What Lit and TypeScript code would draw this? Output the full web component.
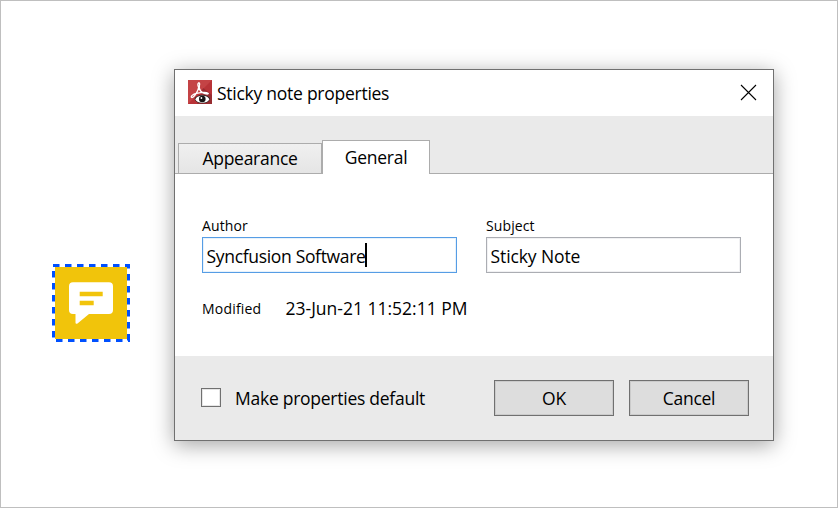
import { LitElement, html, css, svg } from "lit";
import { customElement, property } from "lit/decorators.js";

@customElement("sticky-marker")
class StickyMarker extends LitElement {
  static styles = css`
    :host { display: block; width: 78px; height: 78px; }
    svg { display: block; }
  `;
  render() {
    return html`<svg width="78" height="78" viewBox="0 0 78 78">
      <rect x="3" y="3" width="72" height="72" fill="#f1c40b"></rect>
      <g fill="none" stroke="#0050ff" stroke-width="3">
        <path d="M1 1.5H78" stroke-dasharray="6.500 5.500"></path>
        <path d="M1.500 7V76" stroke-dasharray="6.500 5.500"></path>
        <path d="M76.500 0V78" stroke-dasharray="6.500 5.500" stroke-dashoffset="2"></path>
        <path d="M4 76.500H78" stroke-dasharray="6.500 5.500"></path>
      </g>
      <path fill="#fff" d="M21 18.300H57a4 4 0 0 1 4 4V46a4 4 0 0 1-4 4H37L25.500 59.400q-2 1.200-2-1V50H21a4 4 0 0 1-4-4V22.300a4 4 0 0 1 4-4Z"></path>
      <path fill="#f1c40b" d="M27.700 27.700h23v4.600h-23zM27.700 36.800h14v4.500h-14z"></path>
    </svg>`;
  }
}

@customElement("text-field")
class TextField extends LitElement {
  @property() label = "";
  @property() value = "";
  @property({ type: Boolean, reflect: true }) active = false;
  static styles = css`
    :host { display: block; width: 255px; }
    .label { font-size: 14px; line-height: 20px; height: 21px; letter-spacing: 0.1px; }
    .box {
      box-sizing: border-box; height: 36px; border: 1px solid #abadb3; background: #fff;
      display: flex; align-items: center; padding: 1px 0 0 3.500px;
      box-shadow: inset 0 0 0 1px #f1f1f3;
      font-size: 17.500px; letter-spacing: -0.1px; line-height: 24px; white-space: nowrap;
    }
    :host([active]) .box { border-color: #569de5; letter-spacing: -0.320px; box-shadow: inset 0 0 0 1px #e8f2fb; }
    .caret { width: 2px; height: 24px; background: #000; margin: -2px 0 0 -0.300px; }
  `;
  render() {
    return html`<div class="label">${this.label}</div>
      <div class="box"><span>${this.value}</span>${this.active ? html`<i class="caret"></i>` : ""}</div>`;
  }
}

const logo = svg`
  <rect width="24" height="24" fill="#b83337"></rect>
  <path d="M0 0H24L0 24Z" fill="#c44345"></path>
  <path d="M15 8L24 15V24H9Z" fill="#962c30"></path>
  <path d="M10.800 2.700C9.300 3.500 10 6 10.600 7.500C10.200 11 6 17.500 3.800 17.500C2 16.500 5 14.200 8.500 13.400C12.500 12.500 18.500 11.800 20.300 13.500C19.500 15 14.500 13 12.800 11.200C11.200 9.500 10.800 7.500 11.400 5.500C11.800 4 11.700 2.800 10.800 2.700Z" fill="none" stroke="#fff" stroke-width="1.300" stroke-linejoin="round"></path>
  <ellipse cx="14.300" cy="19.100" rx="7.600" ry="4.100" fill="#262020"></ellipse>
  <ellipse cx="14.300" cy="19.300" rx="6.800" ry="3.500" fill="#fff"></ellipse>
  <circle cx="14.300" cy="19" r="3.300" fill="#151515"></circle>
  <circle cx="13.400" cy="18" r="0.900" fill="#fff"></circle>`;

@customElement("app-root")
class AppRoot extends LitElement {
  static styles = css`
    :host {
      box-sizing: border-box; display: flex; align-items: flex-start;
      width: 838px; height: 508px; background: #fff; border: 1px solid #bfbfbf;
      padding: 68px 0 0 51px; overflow: hidden;
      font-family: "Open Sans", "Noto Sans", sans-serif; color: #000;
      font-size: 17.500px; line-height: 24px; letter-spacing: -0.260px;
    }
    * { box-sizing: border-box; }
    sticky-marker { margin-top: 195px; flex: none; }
    .dialog {
      width: 600px; height: 372px; margin-left: 44px; flex: none;
      border: 1px solid #707070; background: #fff;
      box-shadow: 0 4px 20px rgba(0, 0, 0, 0.36);
      display: flex; flex-direction: column;
    }
    .title { height: 46px; display: flex; padding: 10px 16px 0 13px; }
    .title .name { margin: 1px 0 0 5px; flex: 1; }
    .close { margin-top: 4px; }
    .tabs {
      height: 58px; background: #eaeaea; border-bottom: 1px solid #acacac;
      display: flex; align-items: flex-end; padding-left: 3px;
    }
    .tab {
      width: 144px; height: 30px; border: 1px solid #acacac; border-bottom: 0;
      background: linear-gradient(#f0f0f0, #e5e5e5); text-align: center; padding-top: 2px;
    }
    .tab.on {
      width: 108px; height: 34px; margin-bottom: -1px; background: #fff; padding-top: 4px;
    }
    .body { height: 182px; padding: 42px 27px 0; }
    .fields { display: flex; gap: 29px; }
    .modified { display: flex; margin-top: 23px; align-items: flex-start; letter-spacing: 0; }
    .modified .key { width: 83.500px; padding-top: 1px; font-size: 14px; letter-spacing: 0.200px; }
    .footer { flex: 1; background: #eaeaea; display: flex; padding: 24px 24px 0 26px; }
    .check { width: 20px; height: 19px; border: 1px solid #707070; background: #fff; margin-top: 8px; box-shadow: inset 0 0 0 1px #e6e6e6; }
    .make { flex: 1; margin: 6px 0 0 14px; }
    .btn {
      width: 120px; height: 36px; border: 1px solid #707070; background: #ddd;
      box-shadow: inset 0 0 0 1px #cbcbcb;
      text-align: center; padding-top: 5px; margin-left: 15px;
    }
  `;
  render() {
    return html`
      <sticky-marker></sticky-marker>
      <section class="dialog">
        <header class="title">
          <svg width="24" height="24" viewBox="0 0 24 24">${logo}</svg>
          <span class="name">Sticky note properties</span>
          <svg class="close" width="17" height="17" viewBox="0 0 17 17">
            <path d="M1 1L16 16M16 1L1 16" stroke="#000" stroke-width="1.100" fill="none"></path>
          </svg>
        </header>
        <nav class="tabs">
          <div class="tab">Appearance</div>
          <div class="tab on">General</div>
        </nav>
        <div class="body">
          <div class="fields">
            <text-field label="Author" value="Syncfusion Software" active></text-field>
            <text-field label="Subject" value="Sticky Note"></text-field>
          </div>
          <div class="modified">
            <span class="key">Modified</span><span>23-Jun-21 11:52:11 PM</span>
          </div>
        </div>
        <footer class="footer">
          <div class="check"></div>
          <span class="make">Make properties default</span>
          <div class="btn">OK</div>
          <div class="btn">Cancel</div>
        </footer>
      </section>`;
  }
}
